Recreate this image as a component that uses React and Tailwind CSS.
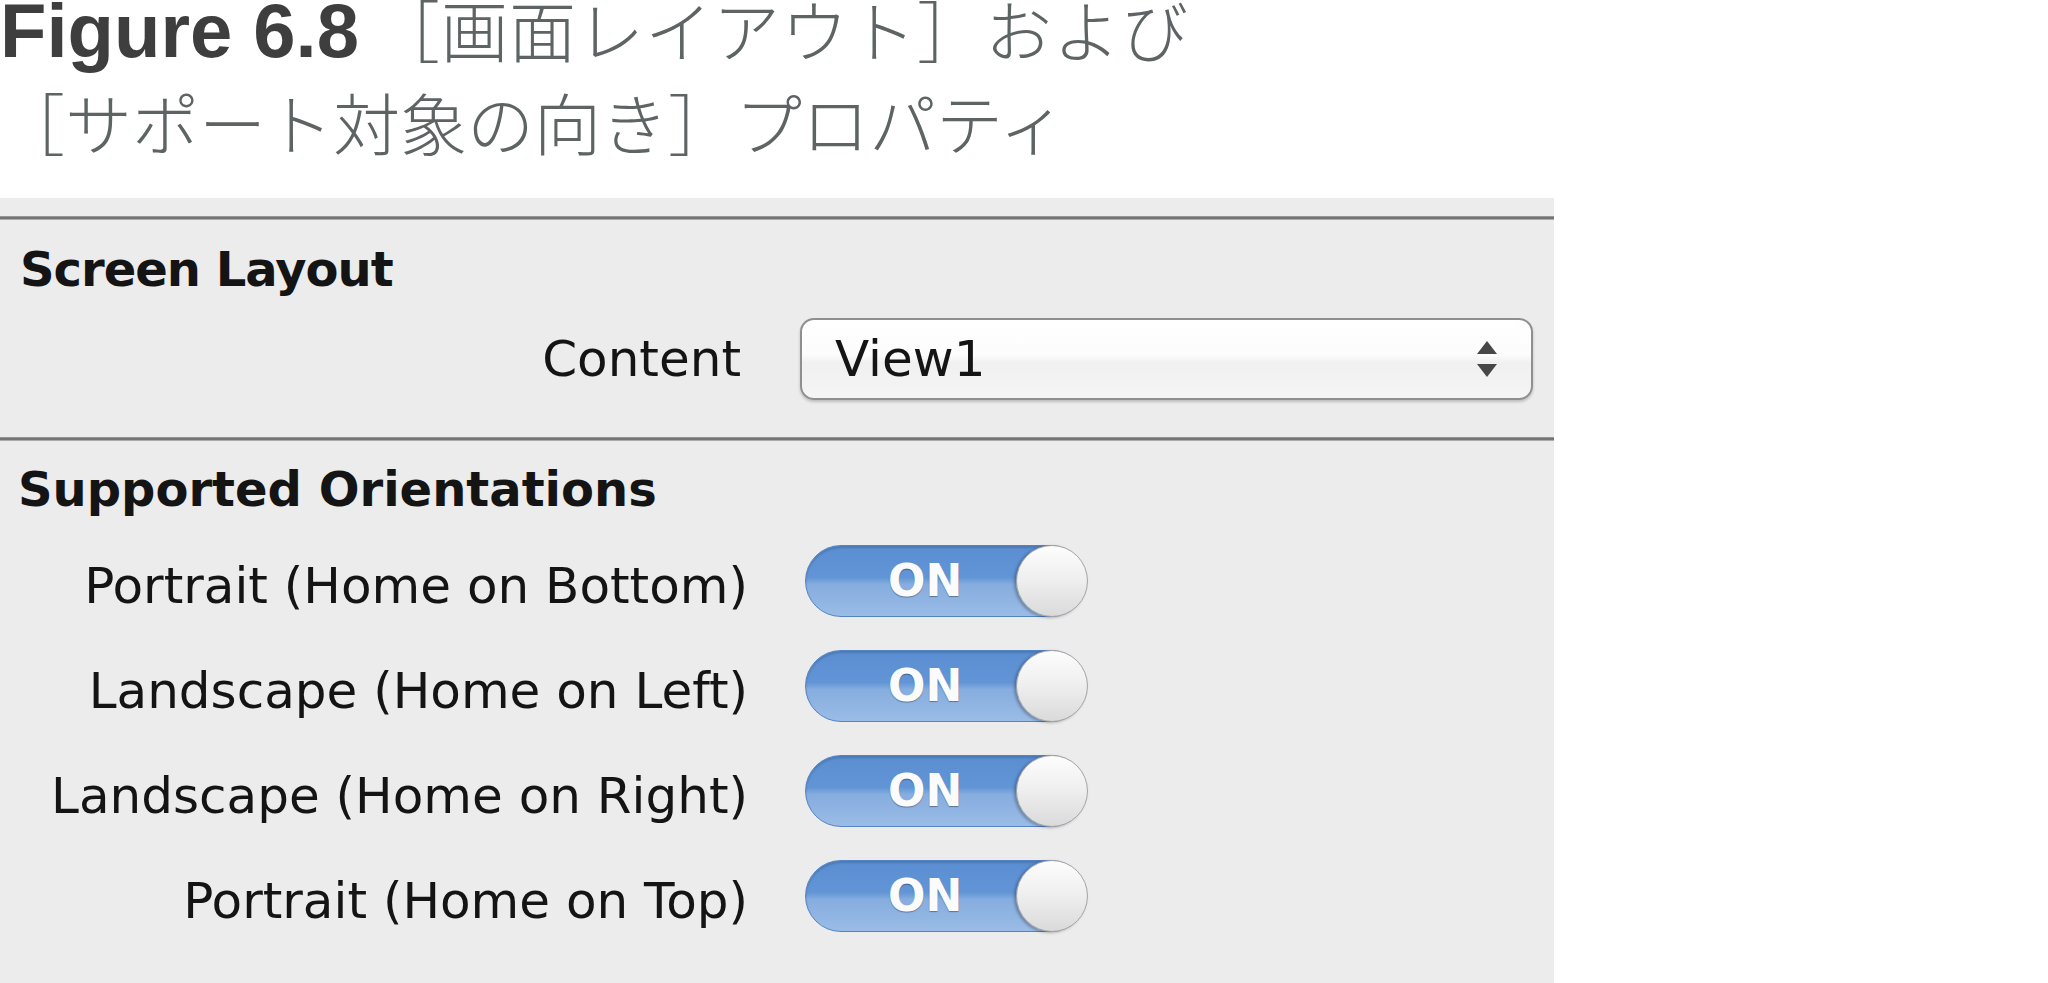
export default function App() {
  const rows = [
    "Portrait (Home on Bottom)",
    "Landscape (Home on Left)",
    "Landscape (Home on Right)",
    "Portrait (Home on Top)",
  ];

  const Sep = () => (
    <div className="h-[4px] w-full bg-[linear-gradient(to_bottom,#a8a8a8,#6f6f6f_40%,#787878_70%,#cfcfcf)]" />
  );

  const Toggle = () => (
    <div className="flex h-[72px] w-[282px] items-center rounded-full border border-[#5283c4] bg-[linear-gradient(to_bottom,#5a8ed2,#6295d6_45%,#86addf_55%,#9abce6)] shadow-[inset_0_2px_2px_rgba(0,0,0,0.15)]">
      <span className="ml-[82px] text-[44px] font-bold leading-none text-[#fbfbfb] [text-shadow:0_1px_1px_rgba(0,0,0,0.35)]">
        ON
      </span>
      <span className="ml-auto mr-[-2px] h-[72px] w-[72px] rounded-full border border-[#a5a5a5] bg-[linear-gradient(to_bottom,#fdfdfd,#eeeeee_50%,#dadada)] shadow-[-2px_1px_3px_rgba(0,0,0,0.28)]" />
    </div>
  );

  return (
    <div className="flex h-[983px] w-[2048px] flex-col overflow-hidden bg-white">
      <header className="h-[198px] shrink-0 whitespace-nowrap">
        <div className="leading-[62px]">
          <span className="font-['Liberation_Sans',Arial,sans-serif] text-[76px] font-bold text-[#3e3e3e]">
            Figure 6.8
          </span>
          <span className="ml-[14px] font-['Noto_Sans_CJK_JP',sans-serif] text-[67px] font-light leading-[50px] tracking-[1px] text-[#5e6364]">
            ［画面レイアウト］および
          </span>
        </div>
        <div className="-ml-[2px] font-['Noto_Sans_CJK_JP',sans-serif] text-[67px] font-light leading-[78px] text-[#5e6364]">
          ［サポート対象の向き］プロパティ
        </div>
      </header>

      <section className="w-[1554px] flex-1 bg-[#ececec] font-['DejaVu_Sans',sans-serif] text-[#141414]">
        <div className="h-[18px]" />
        <Sep />
        <div className="pl-[20px] pt-[25px] text-[48px] font-bold leading-none tracking-[-1px]">
          Screen Layout
        </div>
        <div className="mt-[25px] flex h-[82px] items-center">
          <div className="w-[741px] text-right text-[50px] leading-none">Content</div>
          <div className="ml-[59px] flex h-[82px] w-[733px] items-center rounded-[14px] border-2 border-[#8f8f8f] bg-[linear-gradient(to_bottom,#ffffff,#fcfcfc_45%,#f0f0f0_55%,#f5f5f5)] pl-[33px] pr-[33px] shadow-[0_2px_3px_rgba(0,0,0,0.2)]">
            <span className="text-[50px] leading-none">View1</span>
            <svg className="ml-auto" width="22" height="36" viewBox="0 0 22 36">
              <path d="M11 0 L21 13 H1 Z" fill="#474747" />
              <path d="M1 23 H21 L11 36 Z" fill="#474747" />
            </svg>
          </div>
        </div>
        <div className="h-[37px]" />
        <Sep />
        <div className="pl-[18px] pt-[24px] text-[48px] font-bold leading-none">
          Supported Orientations
        </div>
        <div className="mt-[32px] flex flex-col gap-[33px]">
          {rows.map((r) => (
            <div key={r} className="flex h-[72px] items-center">
              <div className="mt-[10px] w-[748px] whitespace-nowrap text-right text-[50px] leading-none">
                {r}
              </div>
              <div className="ml-[57px]">
                <Toggle />
              </div>
            </div>
          ))}
        </div>
      </section>
    </div>
  );
}
